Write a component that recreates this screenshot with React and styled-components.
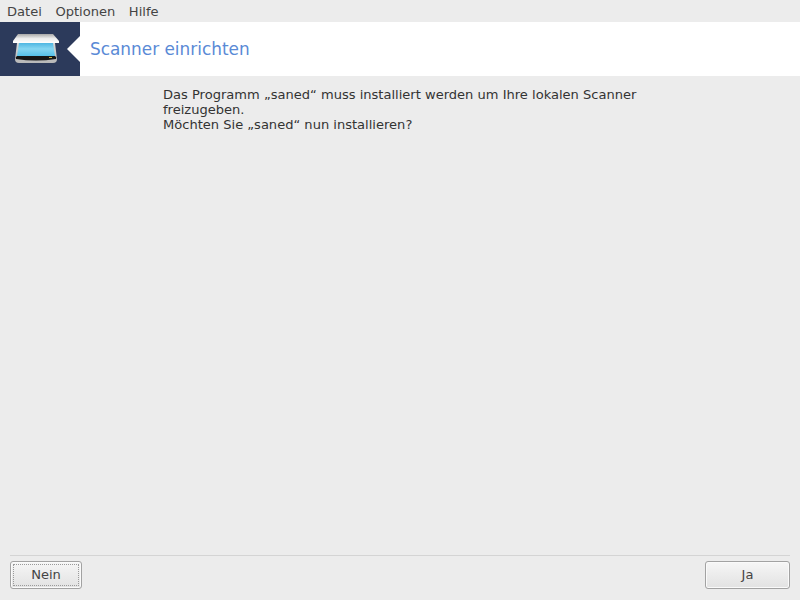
import React from 'react';
import styled, { createGlobalStyle } from 'styled-components';

const GlobalStyle = createGlobalStyle`
  html, body { margin: 0; padding: 0; }
  body { background: #ececec; font-family: "DejaVu Sans", sans-serif; }
`;

const Screen = styled.div`
  width: 800px;
  height: 600px;
  display: flex;
  flex-direction: column;
  overflow: hidden;
  background: #ececec;
  color: #333;
  font-size: 13.05px;
`;

const MenuBar = styled.div`
  height: 22px;
  display: flex;
  align-items: center;
  gap: 13.6px;
  padding: 0 7px;
  flex-shrink: 0;
  color: #444;
`;

const Banner = styled.div`
  height: 54px;
  background: #fff;
  display: flex;
  align-items: center;
  flex-shrink: 0;
`;

const IconBlock = styled.div`
  position: relative;
  width: 80px;
  height: 54px;
  background: #2c3a5b;
  display: flex;
  align-items: center;
  padding-left: 12px;
  box-sizing: border-box;

  &::after {
    content: "";
    position: absolute;
    right: 0;
    top: 14px;
    border-style: solid;
    border-width: 13px 13px 13px 0;
    border-color: transparent #fff transparent transparent;
  }
`;

const Title = styled.h1`
  margin: 0 0 0 10px;
  font-size: 16.9px;
  font-weight: 400;
  color: #5a8ad6;
`;

const Content = styled.div`
  flex: 1;
  padding: 11px 0 0 163px;
`;

const Message = styled.p`
  margin: 0;
  width: 490px;
  line-height: 15px;
  color: #333;
`;

const Footer = styled.div`
  margin: 0 10px;
  height: 45px;
  box-sizing: border-box;
  border-top: 1px solid #d4d4d4;
  padding-top: 5px;
  display: flex;
  justify-content: space-between;
  align-items: flex-start;
  flex-shrink: 0;
`;

const Button = styled.button`
  position: relative;
  width: ${(p) => p.$width}px;
  height: 28px;
  padding: 0 0 1px;
  border: 1px solid #a2a2a2;
  border-radius: 3px;
  background: linear-gradient(#f6f6f6, #e2e2e2);
  box-shadow: inset 0 0 0 1px #fafafa;
  font-family: inherit;
  font-size: 13.05px;
  color: #444;

  ${(p) => p.$focused && `
    &::after {
      content: "";
      position: absolute;
      inset: 2px;
      border: 1px dotted #9a9a9a;
    }
  `}
`;

const ScannerIcon = () => (
  <svg width="48" height="34" viewBox="0 0 48 34">
    <defs>
      <linearGradient id="lid" x1="0" y1="0" x2="0" y2="1">
        <stop offset="0" stopColor="#a8a8a8" />
        <stop offset="0.5" stopColor="#ededed" />
        <stop offset="1" stopColor="#ffffff" />
      </linearGradient>
      <linearGradient id="glass" x1="0" y1="0" x2="0" y2="1">
        <stop offset="0" stopColor="#4fb6e2" />
        <stop offset="0.45" stopColor="#86d6f2" />
        <stop offset="1" stopColor="#55c0e8" />
      </linearGradient>
      <linearGradient id="body" x1="0" y1="0" x2="0" y2="1">
        <stop offset="0" stopColor="#d8d8d8" />
        <stop offset="1" stopColor="#b8b8b8" />
      </linearGradient>
    </defs>
    <path d="M3 27 L5 11 L43 11 L45 27 Q45 31 41 31 L7 31 Q3 31 3 27 Z" fill="url(#body)" />
    <path d="M7 11 L41 11 L43 24 L5 24 Z" fill="url(#glass)" />
    <path d="M5 24 L43 24 Q45 25 44 27 Q24 30 4 27 Q3 25 5 24 Z" fill="#161616" />
    <rect x="37" y="25" width="3" height="1" fill="#c8b040" />
    <path d="M6 2 L41 2 L47 9 L47 11 L1 11 L1 9 Z" fill="url(#lid)" />
  </svg>
);

export default function App() {
  return (
    <Screen>
      <GlobalStyle />
      <MenuBar>
        <span>Datei</span>
        <span>Optionen</span>
        <span>Hilfe</span>
      </MenuBar>
      <Banner>
        <IconBlock>
          <ScannerIcon />
        </IconBlock>
        <Title>Scanner einrichten</Title>
      </Banner>
      <Content>
        <Message>
          Das Programm „saned“ muss installiert werden um Ihre lokalen Scanner freizugeben.
          <br />
          Möchten Sie „saned“ nun installieren?
        </Message>
      </Content>
      <Footer>
        <Button $width={72} $focused>Nein</Button>
        <Button $width={85}>Ja</Button>
      </Footer>
    </Screen>
  );
}
